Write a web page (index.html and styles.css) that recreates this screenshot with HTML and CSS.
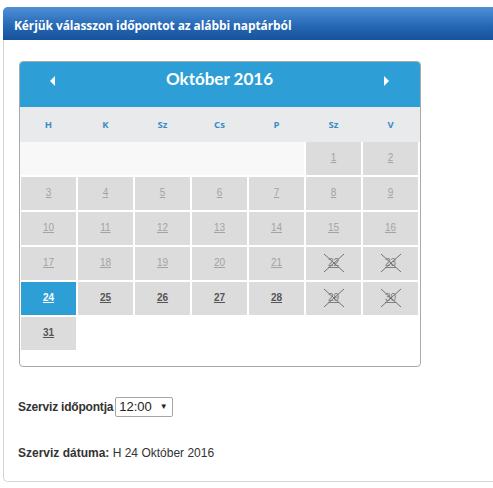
FILE: index.html
```html
<!DOCTYPE html>
<html lang="hu">
<head>
<meta charset="utf-8">
<link rel="stylesheet" href="styles.css">
</head>
<body>
<div class="panel">
  <div class="panel-head">Kérjük válasszon időpontot az alábbi naptárból</div>
  <div class="panel-body">
    <div class="cal">
      <div class="cal-head">
        <span class="arrow arrow-left"></span>
        <span class="cal-title">Október 2016</span>
        <span class="arrow arrow-right"></span>
      </div>
      <div class="cal-days">
        <span>H</span><span>K</span><span>Sz</span><span>Cs</span><span>P</span><span>Sz</span><span>V</span>
      </div>
      <div class="cal-grid">
        <span class="blank"></span>
        <a class="day off">1</a><a class="day off">2</a>
        <a class="day off">3</a><a class="day off">4</a><a class="day off">5</a><a class="day off">6</a><a class="day off">7</a><a class="day off">8</a><a class="day off">9</a>
        <a class="day off">10</a><a class="day off">11</a><a class="day off">12</a><a class="day off">13</a><a class="day off">14</a><a class="day off">15</a><a class="day off">16</a>
        <a class="day off">17</a><a class="day off">18</a><a class="day off">19</a><a class="day off">20</a><a class="day off">21</a>
        <a class="day x">22<svg class="cross" viewBox="0 0 22 20"><path d="M1 1L21 19M21 1L1 19"/></svg></a>
        <a class="day x">23<svg class="cross" viewBox="0 0 22 20"><path d="M1 1L21 19M21 1L1 19"/></svg></a>
        <a class="day sel">24</a><a class="day on">25</a><a class="day on">26</a><a class="day on">27</a><a class="day on">28</a>
        <a class="day x">29<svg class="cross" viewBox="0 0 22 20"><path d="M1 1L21 19M21 1L1 19"/></svg></a>
        <a class="day x">30<svg class="cross" viewBox="0 0 22 20"><path d="M1 1L21 19M21 1L1 19"/></svg></a>
        <a class="day on">31</a>
      </div>
    </div>
    <div class="row-time">
      <span class="lbl lbl-time">Szerviz időpontja</span>
      <span class="sel-box">12:00 <span class="caret">▼</span></span>
    </div>
    <div class="row-date"><span class="lbl">Szerviz dátuma:</span> H 24 Október 2016</div>
  </div>
</div>
</body>
</html>
```

FILE: styles.css
```css
html, body {
  margin: 0;
  padding: 0;
  background: #fff;
}
body {
  font-family: "Liberation Sans", Arial, sans-serif;
  color: #333;
}
.panel {
  margin: 7px 0 0 3px;
  height: 475px;
  border-left: 1px solid #d4d4d4;
  border-bottom: 1px solid #d4d4d4;
  border-radius: 5px 0 0 5px;
  box-sizing: border-box;
}
.panel-head {
  height: 33px;
  margin-left: -1px;
  padding-left: 11px;
  background: linear-gradient(#4f90d7, #2366b2 60%, #17529a);
  border-radius: 5px 0 0 0;
  color: #fff;
  font-family: "Open Sans", Lato, sans-serif;
  font-weight: 700;
  font-size: 12px;
  line-height: 37px;
  letter-spacing: -0.1px;
}
.panel-body {
  padding: 21px 0 0 15px;
}
.cal {
  width: 402px;
  height: 306px;
  box-sizing: border-box;
  border: 1px solid #a9a9a9;
  border-radius: 4px;
  overflow: hidden;
}
.cal-head {
  height: 45px;
  background: #2d9fd6;
  display: flex;
  align-items: center;
  justify-content: space-between;
  padding: 0 31px 0 30px;
  color: #fff;
}
.cal-title {
  font-family: Lato, "Open Sans", sans-serif;
  font-weight: 700;
  font-size: 17px;
  margin-top: -13px;
}
.arrow {
  width: 0;
  height: 0;
  border-top: 5px solid transparent;
  border-bottom: 5px solid transparent;
  margin-top: -8px;
}
.arrow-left {
  border-right: 5px solid #fff;
}
.arrow-right {
  border-left: 5px solid #fff;
}
.cal-days {
  height: 35px;
  background: #e9eaec;
  display: grid;
  grid-template-columns: repeat(7, 55px);
  column-gap: 2px;
  padding: 0 1px;
  align-items: center;
  text-align: center;
  font-family: "Open Sans", Lato, sans-serif;
  font-weight: 700;
  font-size: 9.5px;
  color: #3a8cc4;
}
.cal-grid {
  display: grid;
  grid-template-columns: repeat(7, 55px);
  grid-auto-rows: 33px;
  gap: 2px;
  padding: 0 1px;
}
.blank {
  grid-column: 1 / 6;
  background: #f8f8f8;
  margin-left: -1px;
}
.day {
  position: relative;
  display: flex;
  align-items: center;
  justify-content: center;
  background: #dcdcdd;
  font-size: 10px;
  text-decoration: underline;
  padding-bottom: 2px;
  box-sizing: border-box;
}
.day.off {
  color: #a3a3a3;
}
.day.x {
  color: #808080;
}
.day.on {
  color: #555;
  font-weight: 700;
}
.day.sel {
  background: #2d9fd6;
  color: #fff;
  font-weight: 700;
}
.cross {
  position: absolute;
  left: 50%;
  top: 50%;
  width: 22px;
  height: 20px;
  margin: -11px 0 0 -11px;
  fill: none;
  stroke: #737373;
  stroke-width: 1;
}
.row-time {
  display: flex;
  align-items: center;
  margin: 30px 0 0 -1px;
  font-size: 12px;
}
.lbl {
  font-weight: 700;
  color: #333;
}
.lbl-time {
  letter-spacing: -0.2px;
}
.sel-box {
  margin-left: 2px;
  width: 58px;
  height: 20px;
  box-sizing: border-box;
  border: 1px solid #a6a6a6;
  border-radius: 2px;
  padding-left: 3px;
  font-size: 13px;
  line-height: 18px;
  color: #222;
  display: flex;
  align-items: center;
  gap: 8px;
}
.caret {
  font-size: 8px;
}
.row-date {
  margin: 29px 0 0 -1px;
  font-size: 12px;
  color: #333;
}
```
